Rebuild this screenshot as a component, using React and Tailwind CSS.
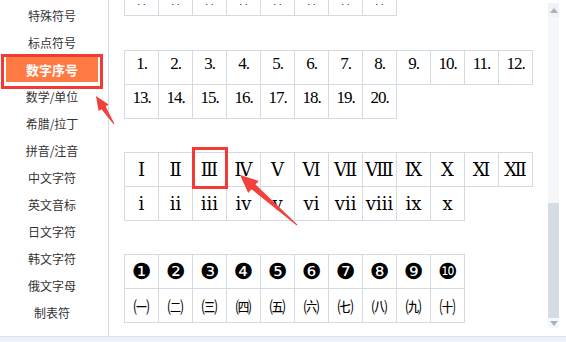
import React from "react";
import clsx from "clsx";

const menu = [
  "特殊符号",
  "标点符号",
  "数字序号",
  "数学/单位",
  "希腊/拉丁",
  "拼音/注音",
  "中文字符",
  "英文音标",
  "日文字符",
  "韩文字符",
  "俄文字母",
  "制表符",
];

const tables = [
  { kind: "top", rows: [["·  ·", "·  ·", "·  ·", "·  ·", "·  ·", "·  ·", "·  ·", "·  ·"]] },
  {
    kind: "num",
    rows: [
      ["1.", "2.", "3.", "4.", "5.", "6.", "7.", "8.", "9.", "10.", "11.", "12."],
      ["13.", "14.", "15.", "16.", "17.", "18.", "19.", "20."],
    ],
  },
  {
    kind: "roman",
    rows: [
      ["Ⅰ", "Ⅱ", "Ⅲ", "Ⅳ", "Ⅴ", "Ⅵ", "Ⅶ", "Ⅷ", "Ⅸ", "Ⅹ", "Ⅺ", "Ⅻ"],
      ["ⅰ", "ⅱ", "ⅲ", "ⅳ", "ⅴ", "ⅵ", "ⅶ", "ⅷ", "ⅸ", "ⅹ"],
    ],
  },
  {
    kind: "circle",
    rows: [
      ["❶", "❷", "❸", "❹", "❺", "❻", "❼", "❽", "❾", "❿"],
      ["㈠", "㈡", "㈢", "㈣", "㈤", "㈥", "㈦", "㈧", "㈨", "㈩"],
    ],
  },
];

function SymbolTable({ kind, rows, className }) {
  return (
    <div className={className}>
      {rows.map((row, r) => (
        <div key={r} className="flex">
          {row.map((ch, c) => (
            <div
              key={c}
              className={clsx(
                "flex justify-center border-r border-b border-[#d3dae1] text-black cursor-pointer",
                c === 0 ? "w-[35px] border-l" : "w-[34px]",
                r === 0 ? "h-[35px] border-t" : "h-[34px]",
                kind === "top" && "items-end text-[9px] leading-none text-[#b8b8b8] pb-[6px] font-['Liberation_Sans',sans-serif]",
                kind === "num" && "items-center pb-[8px] text-[17px] tracking-[-1px] font-['Liberation_Serif',serif]",
                kind === "roman" && "items-center text-[18px] font-['DejaVu_Serif','Liberation_Serif','Noto_Sans_CJK_SC',serif]",
                kind === "circle" && r === 0 && "items-center text-[22px] leading-none font-['DejaVu_Sans',sans-serif]",
                kind === "circle" && r === 1 && "items-center text-[16px] font-['Noto_Sans_CJK_SC',sans-serif]"
              )}
            >
              {ch}
            </div>
          ))}
        </div>
      ))}
    </div>
  );
}

export default function App() {
  return (
    <div className="relative w-[566px] h-[342px] overflow-hidden bg-white font-['Noto_Sans_CJK_SC',sans-serif]">
      <div className="flex h-[337px] border-b border-[#dde3ea]">
        {/* Left category menu */}
        <div className="w-[109px] shrink-0 border-r border-[#d3dae1] pt-[2px]">
          {menu.map((name) => (
            <div
              key={name}
              className={clsx(
                "ml-[5px] w-[94px] h-[27px] flex items-center justify-center text-[12px]",
                name === "数字序号"
                  ? "bg-[#ff7b43] text-white font-bold text-[13px] border border-white"
                  : "text-[#333]"
              )}
            >
              {name}
            </div>
          ))}
        </div>

        {/* Symbol tables */}
        <div className="flex-1 overflow-hidden pl-[15px]">
          <SymbolTable {...tables[0]} className="-mt-[19px] mb-[34px]" />
          <SymbolTable {...tables[1]} className="mb-[33px]" />
          <SymbolTable {...tables[2]} className="mb-[33px]" />
          <SymbolTable {...tables[3]} />
        </div>

        {/* Scrollbar */}
        <div className="w-[11px] shrink-0 mr-[7px] mt-[3px] mb-[8px] flex flex-col bg-[#eef3f8]">
          <div className="h-[14px] flex items-center justify-center">
            <div className="w-0 h-0 border-l-[4px] border-r-[4px] border-b-[5px] border-l-transparent border-r-transparent border-b-[#a9b2bb]" />
          </div>
          <div className="flex-1 flex flex-col bg-[#f5f8fb]">
            <div className="h-[186px]" />
            <div className="flex-1 bg-[#d5dde4]" />
          </div>
          <div className="h-[10px] bg-[#f5f8fb] flex items-center justify-center">
            <div className="w-0 h-0 border-l-[4px] border-r-[4px] border-t-[5px] border-l-transparent border-r-transparent border-t-[#a9b2bb]" />
          </div>
        </div>
      </div>
      <div className="h-[5px] bg-[#edf3f9]" />

      {/* Annotation marks */}
      <div className="absolute left-[1px] top-[54px] w-[102px] h-[35px] border-[3px] border-[#f23b36] pointer-events-none" />
      <div className="absolute left-[192px] top-[147px] w-[36px] h-[42px] border-[3px] border-[#f23b36] pointer-events-none" />
      <svg className="absolute left-0 top-0 pointer-events-none" width="566" height="342" viewBox="0 0 566 342">
        <polygon
          fill="#f2403b"
          points="114.4,123.7 105.7,106.4 108.6,104.6 96,96 98.6,111 101.5,109.2 113.6,124.3"
        />
        <polygon
          fill="#f2403b"
          points="297.3,224.6 255.5,184.6 258.8,180.9 240,175 248.2,192.9 251.5,189.2 296.7,225.4"
        />
      </svg>
    </div>
  );
}
